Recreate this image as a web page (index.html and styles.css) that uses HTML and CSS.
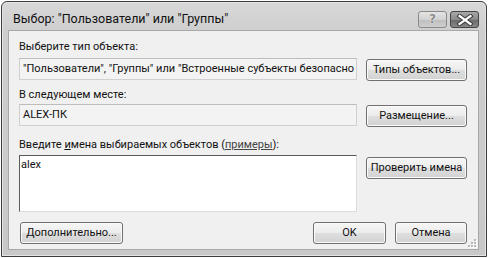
FILE: index.html
```html
<!DOCTYPE html>
<html lang="ru">
<head>
<meta charset="utf-8">
<title>Выбор</title>
<link rel="stylesheet" href="styles.css">
</head>
<body>
<div class="window">
  <div class="titlebar">
    <span class="title">Выбор: "Пользователи" или "Группы"</span>
    <div class="caption-btns">
      <span class="cbtn help">?</span>
      <span class="cbtn close">
        <svg width="18" height="12" viewBox="0 0 18 12">
          <path d="M3.5 2 L14.5 10 M14.5 2 L3.5 10" stroke="#3a3a3a" stroke-width="4.2" stroke-linecap="square" fill="none"/>
          <path d="M3.5 2 L14.5 10 M14.5 2 L3.5 10" stroke="#ffffff" stroke-width="2.2" stroke-linecap="square" fill="none"/>
        </svg>
      </span>
    </div>
  </div>
  <div class="client">
    <div class="label l1">Выберите тип объекта:</div>
    <div class="row">
      <div class="field ro">"Пользователи", "Группы" или "Встроенные субъекты безопасно</div>
      <div class="btn">Типы объектов...</div>
    </div>
    <div class="label l2">В следующем месте:</div>
    <div class="row">
      <div class="field ro">ALEX-ПК</div>
      <div class="btn">Размещение...</div>
    </div>
    <div class="label l3">Введите <u>и</u>мена выбираемых объектов (<span class="link">примеры</span>):</div>
    <div class="row">
      <div class="field edit">alex</div>
      <div class="btn check">Проверить имена</div>
    </div>
    <div class="footer">
      <div class="btn adv">Дополнительно...</div>
      <div class="spacer"></div>
      <div class="btn ok">OK</div>
      <div class="btn cancel">Отмена</div>
    </div>
    <div class="grip">
      <i></i><i></i><i></i><i></i><i></i><i></i>
    </div>
  </div>
</div>
</body>
</html>
```

FILE: styles.css
```css
html, body {
  margin: 0;
  padding: 0;
  background: #ffffff;
}
body {
  width: 488px;
  height: 258px;
  overflow: hidden;
  font-family: Roboto, "Noto Sans", sans-serif;
  font-size: 11px;
  color: #111;
}
.window {
  margin: 1px 0 0 1px;
  width: 486px;
  height: 256px;
  box-sizing: border-box;
  border: 1px solid #3c3c3c;
  border-radius: 6px 6px 0 0;
  background: linear-gradient(to bottom, #d8d8d8 0px, #cecece 30px, #c8c8c8 100%);
  display: flex;
  flex-direction: column;
  box-shadow: inset 0 0 0 1px #e4e4e4;
}
.titlebar {
  height: 28px;
  display: flex;
  align-items: center;
  padding-left: 11px;
  padding-right: 7px;
  flex: none;
}
.title {
  font-size: 12.5px;
  color: #111;
  line-height: 16px;
  margin-top: 5px;
  white-space: nowrap;
}
.caption-btns {
  margin-left: auto;
  display: flex;
  gap: 3px;
  margin-top: 7px;
}
.cbtn {
  width: 29px;
  height: 17px;
  box-sizing: border-box;
  border: 1px solid #6a6a6a;
  border-radius: 3px;
  display: flex;
  align-items: center;
  justify-content: center;
}
.help {
  background: linear-gradient(to bottom, #e4e4e4 0%, #d2d2d2 50%, #bdbdbd 51%, #cfcfcf 100%);
  color: #8a8a8a;
  font-family: "DejaVu Sans", sans-serif;
  font-weight: bold;
  font-size: 12px;
  line-height: 15px;
  text-shadow: 0 0 1px #fff, 0 0 1px #fff;
  border-color: #8a8a8a;
}
.close {
  background: linear-gradient(to bottom, #a8a8a8 0%, #8a8a8a 50%, #686868 51%, #888888 100%);
  border-color: #444444;
}
.client {
  position: relative;
  margin: 0 7px 0 6px;
  height: 220px;
  box-sizing: border-box;
  border: 1px solid #a8a8a8;
  background: #f0f0f0;
  padding: 8px 11px 0 10px;
  flex: none;
}
.label {
  line-height: 16px;
  white-space: nowrap;
  font-size: 11px;
}
.l1 { margin-bottom: 3px; }
.l2 { margin-top: 6px; margin-bottom: 1px; }
.l3 { margin-top: 10px; margin-bottom: 2px; }
.link {
  color: #444;
  text-decoration: underline;
}
.row {
  display: flex;
  align-items: flex-start;
  gap: 9px;
}
.field {
  width: 338px;
  height: 22px;
  box-sizing: border-box;
  flex: none;
  overflow: hidden;
  white-space: nowrap;
  line-height: 20px;
  padding-left: 3px;
  font-size: 11px;
}
.ro {
  border: 1px solid #d0d0d0;
  border-top-color: #bdbdbd;
  background: #f3f3f3;
}
.edit {
  height: 57px;
  background: #ffffff;
  border: 1px solid #dcdcdc;
  border-top-color: #5a5a5a;
  border-left-color: #5a5a5a;
  line-height: 16px;
  padding-left: 1px;
  padding-top: 1px;
}
.btn {
  width: 101px;
  height: 22px;
  box-sizing: border-box;
  flex: none;
  border: 1px solid #707070;
  border-radius: 3px;
  background: linear-gradient(to bottom, #f6f6f6 0%, #ececec 48%, #dedede 52%, #d2d2d2 100%);
  box-shadow: inset 0 0 0 1px #fbfbfb;
  text-align: center;
  line-height: 20px;
  white-space: nowrap;
  color: #111;
  font-size: 11px;
  overflow: hidden;
}
.row .btn { margin-top: 1px; }
.check { margin-top: 2px !important; }
.footer {
  display: flex;
  margin-top: 10px;
  gap: 9px;
  padding-left: 1px;
}
.spacer { flex: 1; }
.adv { width: 103px; }
.ok { width: 73px; }
.cancel { width: 72px; }
.grip {
  position: absolute;
  right: 1px;
  bottom: 1px;
  width: 10px;
  height: 10px;
}
.grip i {
  position: absolute;
  width: 2px;
  height: 2px;
  background: #b8b8b8;
  box-shadow: 1px 1px 0 #ffffff;
}
.grip i:nth-child(1) { right: 1px; bottom: 1px; }
.grip i:nth-child(2) { right: 4px; bottom: 1px; }
.grip i:nth-child(3) { right: 7px; bottom: 1px; }
.grip i:nth-child(4) { right: 1px; bottom: 4px; }
.grip i:nth-child(5) { right: 4px; bottom: 4px; }
.grip i:nth-child(6) { right: 1px; bottom: 7px; }
```
